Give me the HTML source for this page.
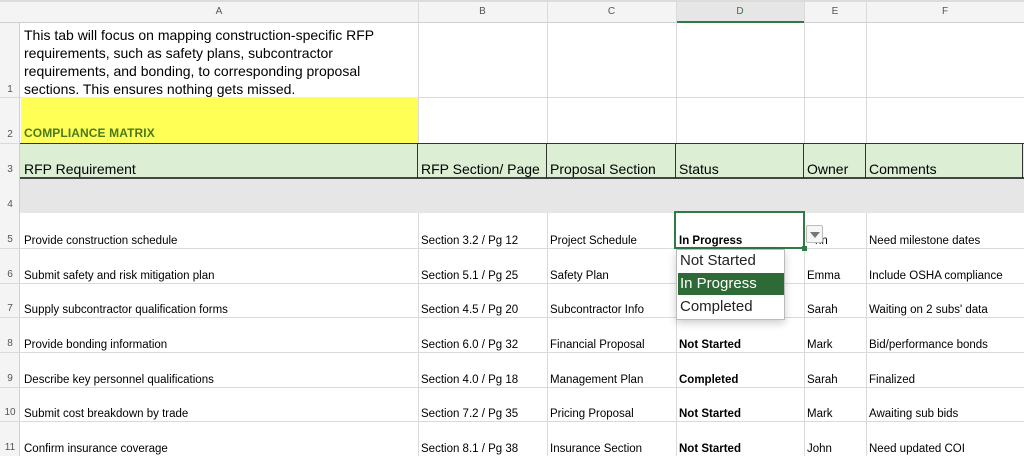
<!DOCTYPE html>
<html><head><style>
*{margin:0;padding:0;box-sizing:border-box}
body{width:1024px;height:456px;overflow:hidden;background:#fff;font-family:"Liberation Sans",Arial,sans-serif;position:relative}
.a{position:absolute}
.hl{position:absolute;height:1px;background:#dadada;left:0;width:1024px}
.vl{position:absolute;width:1px;background:#dadada;top:0;height:456px}
.ch{position:absolute;top:0;height:23px;font-size:10px;color:#555;text-align:center;line-height:24px}
.rn{position:absolute;left:0;width:20px;font-size:10px;color:#555;text-align:center}
.t{position:absolute;font-size:11.5px;color:#000;white-space:nowrap}
.h{position:absolute;font-size:14px;color:#000;white-space:nowrap}
b{font-weight:bold}
</style></head><body>
<div class="a" style="left:0;top:0;width:1024px;height:23px;background:#f4f4f4;border-bottom:1px solid #cfcfcf;border-top:2px solid #dcdcdc"></div>
<div class="a" style="left:676px;top:2px;width:128px;height:21px;background:#e6e6e6;border-bottom:2px solid #2f7a45"></div>
<div class="a" style="left:0;top:23px;width:20px;height:433px;background:#f4f4f4;border-right:1px solid #cfcfcf"></div>
<div class="ch" style="left:20px;width:398px">A</div>
<div class="ch" style="left:418px;width:129px">B</div>
<div class="ch" style="left:547px;width:129px">C</div>
<div class="ch" style="left:676px;width:128px;color:#2f7a45">D</div>
<div class="ch" style="left:804px;width:62px">E</div>
<div class="ch" style="left:866px;width:158px">F</div>
<div class="vl" style="left:418px"></div><div class="vl" style="left:547px"></div><div class="vl" style="left:676px"></div><div class="vl" style="left:804px"></div><div class="vl" style="left:866px"></div>
<div class="hl" style="top:97px"></div><div class="hl" style="top:143px"></div>
<div class="hl" style="top:248px"></div><div class="hl" style="top:283px"></div><div class="hl" style="top:317px"></div><div class="hl" style="top:352px"></div><div class="hl" style="top:387px"></div><div class="hl" style="top:421px"></div>
<div class="a" style="left:21px;top:24px;width:396px;height:73px;background:#fff"></div>
<div class="a" style="left:21px;top:97px;width:397px;height:46px;background:#ffff55"></div>
<div class="a" style="left:24px;top:26px;font-size:14px;line-height:18px;color:#000;width:395px;z-index:2">This tab will focus on mapping construction-specific RFP requirements, such as safety plans, subcontractor requirements, and bonding, to corresponding proposal sections. This ensures nothing gets missed.</div>
<div class="a" style="left:24px;top:126px;font-size:12px;font-weight:bold;color:#4a7a1e;letter-spacing:0.1px">COMPLIANCE MATRIX</div>
<div class="a" style="left:20px;top:143px;width:1004px;height:36px;background:#dcefd4;border-top:1px solid #333;border-bottom:2px solid #444"></div>
<div class="a" style="left:417px;top:143px;width:1px;height:36px;background:#333"></div>
<div class="a" style="left:546px;top:143px;width:1px;height:36px;background:#333"></div>
<div class="a" style="left:675px;top:143px;width:1px;height:36px;background:#333"></div>
<div class="a" style="left:803px;top:143px;width:1px;height:36px;background:#333"></div>
<div class="a" style="left:865px;top:143px;width:1px;height:36px;background:#333"></div>
<div class="a" style="left:1022px;top:143px;width:1px;height:36px;background:#333"></div>
<div class="h" style="left:24px;top:161px">RFP Requirement</div>
<div class="h" style="left:421px;top:161px">RFP Section/ Page</div>
<div class="h" style="left:550px;top:161px">Proposal Section</div>
<div class="h" style="left:679px;top:161px">Status</div>
<div class="h" style="left:807px;top:161px">Owner</div>
<div class="h" style="left:869px;top:161px">Comments</div>
<div class="a" style="left:20px;top:179px;width:1004px;height:34px;background:#e6e6e6"></div>
<div class="rn" style="top:84px">1</div><div class="rn" style="top:129px">2</div><div class="rn" style="top:164px">3</div><div class="rn" style="top:199px">4</div>
<div class="rn" style="top:234px">5</div><div class="rn" style="top:269px">6</div><div class="rn" style="top:303px">7</div><div class="rn" style="top:338px">8</div><div class="rn" style="top:373px">9</div><div class="rn" style="top:407px">10</div><div class="rn" style="top:442px">11</div>
<div class="t" style="left:24px;top:235px">Provide construction schedule</div><div class="t" style="left:421px;top:235px">Section 3.2 / Pg 12</div><div class="t" style="left:550px;top:235px">Project Schedule</div><div class="t" style="left:869px;top:235px">Need milestone dates</div><div class="t" style="left:815px;top:235px">hn</div>
<div class="t" style="left:24px;top:270px">Submit safety and risk mitigation plan</div><div class="t" style="left:421px;top:270px">Section 5.1 / Pg 25</div><div class="t" style="left:550px;top:270px">Safety Plan</div><div class="t" style="left:807px;top:270px">Emma</div><div class="t" style="left:869px;top:270px">Include OSHA compliance</div>
<div class="t" style="left:24px;top:304px">Supply subcontractor qualification forms</div><div class="t" style="left:421px;top:304px">Section 4.5 / Pg 20</div><div class="t" style="left:550px;top:304px">Subcontractor Info</div><div class="t" style="left:807px;top:304px">Sarah</div><div class="t" style="left:869px;top:304px">Waiting on 2 subs' data</div>
<div class="t" style="left:24px;top:339px">Provide bonding information</div><div class="t" style="left:421px;top:339px">Section 6.0 / Pg 32</div><div class="t" style="left:550px;top:339px">Financial Proposal</div><div class="t" style="left:679px;top:339px"><b>Not Started</b></div><div class="t" style="left:807px;top:339px">Mark</div><div class="t" style="left:869px;top:339px">Bid/performance bonds</div>
<div class="t" style="left:24px;top:374px">Describe key personnel qualifications</div><div class="t" style="left:421px;top:374px">Section 4.0 / Pg 18</div><div class="t" style="left:550px;top:374px">Management Plan</div><div class="t" style="left:679px;top:374px"><b>Completed</b></div><div class="t" style="left:807px;top:374px">Sarah</div><div class="t" style="left:869px;top:374px">Finalized</div>
<div class="t" style="left:24px;top:408px">Submit cost breakdown by trade</div><div class="t" style="left:421px;top:408px">Section 7.2 / Pg 35</div><div class="t" style="left:550px;top:408px">Pricing Proposal</div><div class="t" style="left:679px;top:408px"><b>Not Started</b></div><div class="t" style="left:807px;top:408px">Mark</div><div class="t" style="left:869px;top:408px">Awaiting sub bids</div>
<div class="t" style="left:24px;top:443px">Confirm insurance coverage</div><div class="t" style="left:421px;top:443px">Section 8.1 / Pg 38</div><div class="t" style="left:550px;top:443px">Insurance Section</div><div class="t" style="left:679px;top:443px"><b>Not Started</b></div><div class="t" style="left:807px;top:443px">John</div><div class="t" style="left:869px;top:443px">Need updated COI</div>
<div class="a" style="left:674px;top:211px;width:131px;height:38px;border:2px solid #2f7a45;background:#fff"></div>
<div class="t" style="left:679px;top:235px"><b>In Progress</b></div>
<div class="a" style="left:802px;top:246px;width:5px;height:5px;background:#2f7a45"></div>
<div class="a" style="left:806px;top:225px;width:17px;height:18px;border:1px solid #bbb;background:#f6f6f6;border-radius:2px"></div>
<div class="a" style="left:810px;top:232px;width:0;height:0;border-left:5px solid transparent;border-right:5px solid transparent;border-top:6px solid #777"></div>
<div class="a" style="left:676px;top:249px;width:109px;height:71px;background:#fff;border:1px solid #bbb;box-shadow:0 3px 8px rgba(0,0,0,0.2)"></div>
<div class="a" style="left:678px;top:273px;width:106px;height:22px;background:#2d6a35"></div>
<div class="a" style="left:680px;top:252px;font-size:15px;color:#222">Not Started</div>
<div class="a" style="left:680px;top:275px;font-size:15px;color:#fff">In Progress</div>
<div class="a" style="left:680px;top:298px;font-size:15px;color:#222">Completed</div>
</body></html>
